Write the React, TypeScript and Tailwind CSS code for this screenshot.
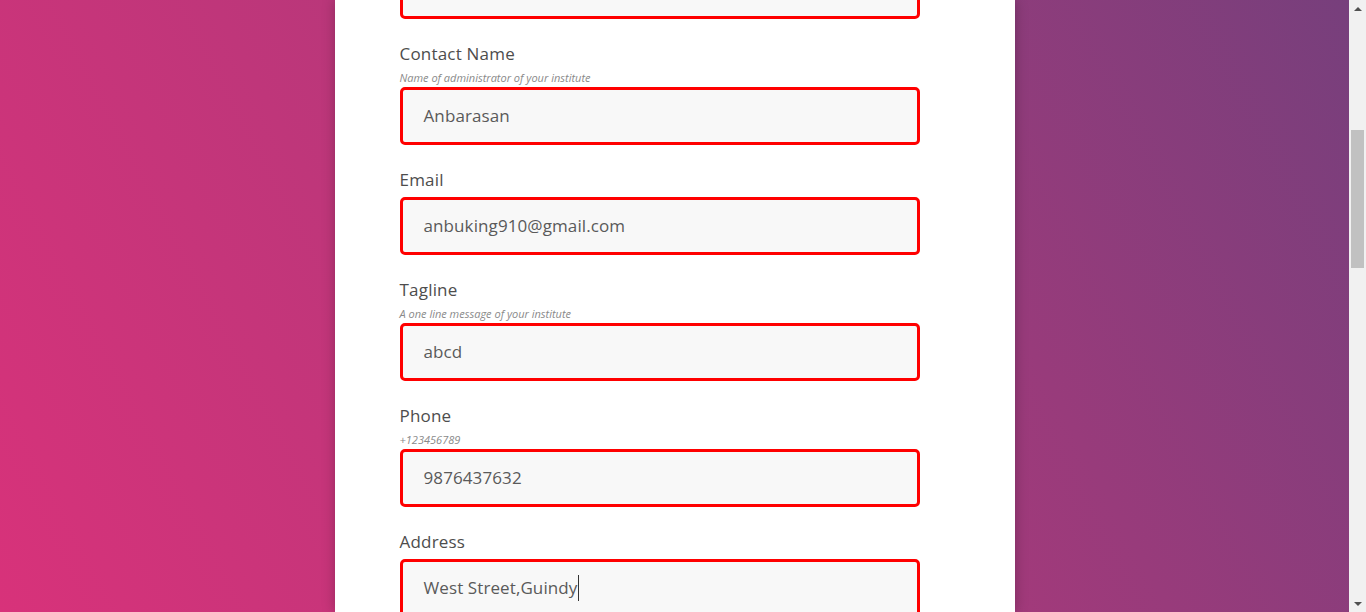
import React from "react";

const font = { fontFamily: '"Open Sans", "Liberation Sans", sans-serif' };

interface FieldProps {
    label: string;
    help?: string;
    value: string;
    caret?: boolean;
}

function Field({ label, help, value, caret }: FieldProps) {
    return (
        <div className="mb-[22px]">
            <div className="pt-px text-[17px] leading-6 tracking-[0.2px] text-[#4d4d4d] mb-[5px]">{label}</div>
            {help && (
                <div className="-mt-[5px] pt-[4px] mb-px text-[11px] leading-4 italic text-[#8a8a8a]">{help}</div>
            )}
            <div className="h-[58px] w-[520px] rounded-[5px] border-[3px] border-[#ff0000] bg-[#f8f8f8] flex items-center pl-[21px] text-[17px] tracking-[0.1px] text-[#5a5a5a]">
                <span className={caret ? "border-r border-[#333] pr-px" : ""}>{value}</span>
            </div>
        </div>
    );
}

export default function App() {
    return (
        <div className="flex h-[612px] w-full overflow-hidden" style={font}>
            <div className="flex-1 flex justify-center bg-[linear-gradient(62deg,#d8327a_0%,#b9377a_40%,#773f7c_100%)]">
                <div className="w-[680px] bg-white shadow-[0_0_12px_rgba(0,0,0,0.25)] px-[65px]">
                    <div className="-mt-[39px]">
                        <div className="mb-[22px] h-[58px] w-[520px] rounded-[5px] border-[3px] border-[#ff0000] bg-[#f8f8f8]" />
                        <Field label="Contact Name" help="Name of administrator of your institute" value="Anbarasan" />
                        <Field label="Email" value="anbuking910@gmail.com" />
                        <Field label="Tagline" help="A one line message of your institute" value="abcd" />
                        <Field label="Phone" help="+123456789" value="9876437632" />
                        <Field label="Address" value="West Street,Guindy" caret />
                    </div>
                </div>
            </div>
            <div className="w-[17px] bg-[#f1f1f1] flex flex-col items-center">
                <div className="h-[17px] flex items-center justify-center">
                    <div className="w-0 h-0 border-l-[4px] border-r-[4px] border-b-[4px] border-l-transparent border-r-transparent border-b-[#505050]" />
                </div>
                <div className="mt-[113px] h-[138px] w-[13px] bg-[#c1c1c1]" />
                <div className="flex-1" />
                <div className="h-[17px] flex items-center justify-center">
                    <div className="w-0 h-0 border-l-[4px] border-r-[4px] border-t-[4px] border-l-transparent border-r-transparent border-t-[#505050]" />
                </div>
            </div>
        </div>
    );
}
